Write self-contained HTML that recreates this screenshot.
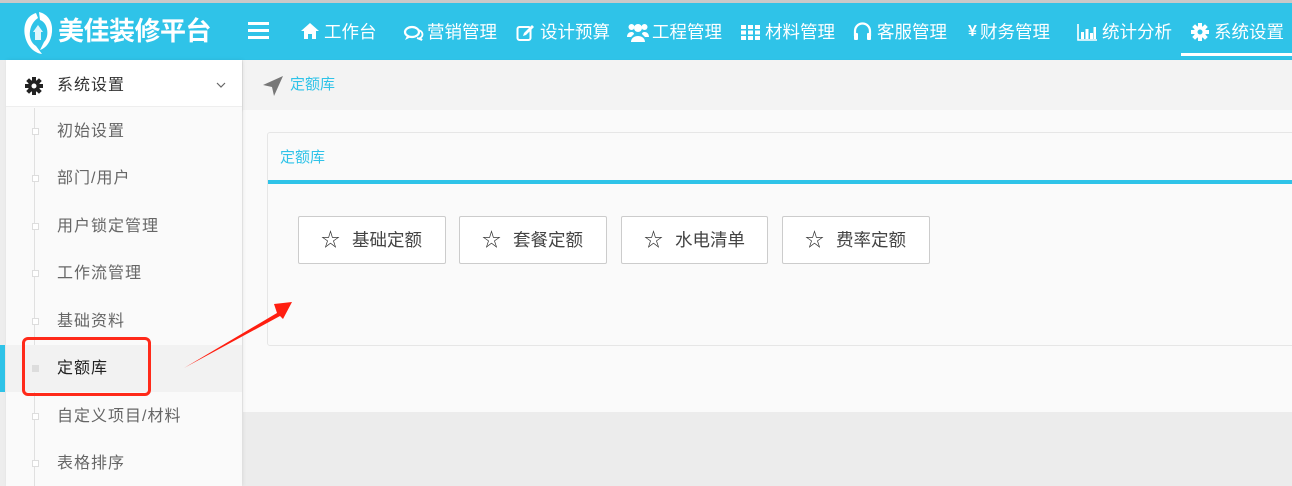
<!DOCTYPE html>
<html><head><meta charset="utf-8">
<style>
*{margin:0;padding:0;box-sizing:border-box}
body{width:1292px;height:486px;overflow:hidden;background:#ececec;font-family:"Liberation Sans","Noto Sans CJK SC",sans-serif;position:relative}
.a{position:absolute;white-space:nowrap}
#top{left:0;top:0;width:1292px;height:3px;background:#c9c9c9}
#hdr{left:0;top:3px;width:1292px;height:57px;background:#2fc3e8}
.nav{color:#fff;font-size:17.5px;top:20px;line-height:24px}
#crumb{left:243px;top:60px;width:1049px;height:50px;background:#f3f3f3;box-shadow:0 1px 2px rgba(0,0,0,.12)}
#main{left:243px;top:110px;width:1049px;height:302px;background:#fafafa}
#side{left:6px;top:60px;width:236px;height:426px;background:#fafafa;box-shadow:1px 0 4px rgba(0,0,0,.08)}
.it{left:57px;font-size:16px;letter-spacing:1px;color:#666;line-height:20px}
.dot{left:32px;width:7px;height:7px;border:1px solid #ddd;background:#fff}
.btn{top:216px;height:48px;width:148px;background:#fff;border:1px solid #ccc;border-radius:2px;font-size:17.5px;color:#444;line-height:46px;padding-left:22px}
.btn span{font-size:19px;margin-right:12px;color:#333}
</style></head><body>
<div class="a" id="top"></div>
<div class="a" id="hdr"></div>
<svg class="a" style="left:22px;top:10px" width="32" height="46" viewBox="0 0 32 46"><path d="M14 3 C4 6 1 16 3 26 C5 36 12 43 20 44 L14 36 C9 33 7 27 8 21 C9 14 13 10 16 8 Z" fill="#fff"/><path d="M17 2 C26 4 31 12 30 22 C29 32 24 38 18 40 L22 32 C25 29 26 24 25 19 C24 14 21 11 18 10 Z" fill="#fff"/><path d="M11 22 L16 15 L21 22 L19 22 L19 30 L13 30 L13 22Z" fill="#fff" opacity=".85"/></svg>
<div class="a" style="left:58px;top:14px;color:#fff;font-size:26px;font-weight:bold;line-height:34px;letter-spacing:-.5px">美佳装修平台</div>
<div class="a" style="left:248px;top:22px;width:21px;height:3px;background:#fff;box-shadow:0 7px 0 #fff,0 14px 0 #fff"></div>
<svg class="a" style="left:300px;top:22px" width="20" height="18" viewBox="0 0 20 18"><path d="M10 1 L1 9 H4 V17 H8 V12 H12 V17 H16 V9 H19Z" fill="#fff"/></svg>
<div class="a nav" style="left:324px">工作台</div>
<svg class="a" style="left:403px;top:25px" width="22" height="16" viewBox="0 0 22 16"><ellipse cx="9" cy="7" rx="7" ry="5" fill="none" stroke="#fff" stroke-width="2.2"/><path d="M4 11 L2 15 L8 12" fill="#fff"/><path d="M15 5 C20 6 21 11 17 13 L19 15 L14 13" fill="none" stroke="#fff" stroke-width="1.8"/></svg>
<div class="a nav" style="left:427px">营销管理</div>
<svg class="a" style="left:516px;top:24px" width="19" height="18" viewBox="0 0 19 18"><rect x="1.5" y="3" width="13" height="13" rx="2" fill="none" stroke="#fff" stroke-width="2"/><path d="M7 12 L8 9 L16 1 L18 3 L10 11Z" fill="#fff"/></svg>
<div class="a nav" style="left:540px">设计预算</div>
<svg class="a" style="left:627px;top:22px" width="22" height="20" viewBox="0 0 22 20"><circle cx="11" cy="6" r="4" fill="#fff"/><circle cx="4.5" cy="5" r="3" fill="#fff"/><circle cx="17.5" cy="5" r="3" fill="#fff"/><path d="M4 20 C4 12 18 12 18 20Z M0 15 C0 9 7 9 7 12 L4 15Z M22 15 C22 9 15 9 15 12 L18 15Z" fill="#fff"/></svg>
<div class="a nav" style="left:652px">工程管理</div>
<svg class="a" style="left:741px;top:25px" width="19" height="15" viewBox="0 0 19 15"><g fill="#fff"><rect x="0" y="0" width="5" height="4"/><rect x="7" y="0" width="5" height="4"/><rect x="14" y="0" width="5" height="4"/><rect x="0" y="5.5" width="5" height="4"/><rect x="7" y="5.5" width="5" height="4"/><rect x="14" y="5.5" width="5" height="4"/><rect x="0" y="11" width="5" height="4"/><rect x="7" y="11" width="5" height="4"/><rect x="14" y="11" width="5" height="4"/></g></svg>
<div class="a nav" style="left:765px">材料管理</div>
<svg class="a" style="left:853px;top:22px" width="19" height="19" viewBox="0 0 19 19"><path d="M2 14 V9 A7.5 7.5 0 0 1 17 9 V14" fill="none" stroke="#fff" stroke-width="2.2"/><rect x="1" y="11" width="4" height="7" rx="1" fill="#fff"/><rect x="14" y="11" width="4" height="7" rx="1" fill="#fff"/></svg>
<div class="a nav" style="left:877px">客服管理</div>
<div class="a nav" style="left:968px;font-weight:bold;font-size:16px">¥</div>
<div class="a nav" style="left:980px">财务管理</div>
<svg class="a" style="left:1077px;top:24px" width="20" height="17" viewBox="0 0 20 17"><path d="M1 0 V16 H20" fill="none" stroke="#fff" stroke-width="1.6"/><g fill="#fff"><rect x="4" y="8" width="3" height="7"/><rect x="8.5" y="5" width="3" height="10"/><rect x="13" y="9" width="3" height="6"/><rect x="16.5" y="3" width="2.5" height="12"/></g></svg>
<div class="a nav" style="left:1102px">统计分析</div>
<svg class="a" style="left:1191px;top:23px" width="18" height="18" viewBox="-9 -9 18 18"><g fill="#fff"><circle r="6"/><g id="t"><rect x="-2" y="-9" width="4" height="4"/></g><use href="#t" transform="rotate(45)"/><use href="#t" transform="rotate(90)"/><use href="#t" transform="rotate(135)"/><use href="#t" transform="rotate(180)"/><use href="#t" transform="rotate(225)"/><use href="#t" transform="rotate(270)"/><use href="#t" transform="rotate(315)"/></g><circle r="2.5" fill="#2fc3e8"/></svg>
<div class="a nav" style="left:1214px">系统设置</div>
<div class="a" style="left:1181px;top:53px;width:111px;height:3px;background:#fff"></div>

<div class="a" id="crumb"></div>
<svg class="a" style="left:262px;top:75px" width="22" height="22" viewBox="0 0 22 22"><path d="M21 1 L1 10 L10 12 L12 21Z" fill="#777"/></svg>
<div class="a" style="left:290px;top:75px;font-size:15px;color:#2fc3e8;line-height:20px">定额库</div>
<div class="a" id="main"></div>
<div class="a" style="left:267px;top:132px;width:1030px;height:214px;background:#fafafa;border:1px solid #e6e6e6;border-radius:3px"></div>
<div class="a" style="left:280px;top:148px;font-size:15px;color:#2fc3e8;line-height:20px">定额库</div>
<div class="a" style="left:268px;top:180px;width:1024px;height:4px;background:#2fc3e8"></div>
<div class="a btn" style="left:298px"><span>☆</span>基础定额</div>
<div class="a btn" style="left:459px"><span>☆</span>套餐定额</div>
<div class="a btn" style="left:621px;width:147px"><span>☆</span>水电清单</div>
<div class="a btn" style="left:782px"><span>☆</span>费率定额</div>

<div class="a" style="left:0;top:60px;width:6px;height:426px;background:#ededed"></div>
<div class="a" id="side"></div>
<div class="a" style="left:6px;top:60px;width:236px;height:47px;background:#fff;border-bottom:1px solid #eee"></div>
<svg class="a" style="left:25px;top:77px" width="18" height="18" viewBox="-9 -9 18 18"><g fill="#222"><circle r="6"/><g id="t2"><rect x="-2" y="-9" width="4" height="4"/></g><use href="#t2" transform="rotate(45)"/><use href="#t2" transform="rotate(90)"/><use href="#t2" transform="rotate(135)"/><use href="#t2" transform="rotate(180)"/><use href="#t2" transform="rotate(225)"/><use href="#t2" transform="rotate(270)"/><use href="#t2" transform="rotate(315)"/></g><circle r="2.5" fill="#fff"/></svg>
<div class="a" style="left:57px;top:76px;font-size:16px;letter-spacing:1px;color:#333;line-height:20px">系统设置</div>
<svg class="a" style="left:216px;top:82px" width="10" height="7" viewBox="0 0 10 7"><path d="M1 1 L5 5 L9 1" fill="none" stroke="#666" stroke-width="1.2"/></svg>
<div class="a" style="left:34px;top:108px;width:1px;height:378px;background:#e0e0e0"></div>
<div class="a" style="left:6px;top:345px;width:236px;height:47px;background:#f2f2f2"></div>
<div class="a" style="left:0;top:345px;width:5px;height:47px;background:#2fc3e8"></div>
<div class="a dot" style="top:128px"></div><div class="a it" style="top:122px">初始设置</div>
<div class="a dot" style="top:175px"></div><div class="a it" style="top:169px">部门/用户</div>
<div class="a dot" style="top:223px"></div><div class="a it" style="top:217px">用户锁定管理</div>
<div class="a dot" style="top:270px"></div><div class="a it" style="top:264px">工作流管理</div>
<div class="a dot" style="top:318px"></div><div class="a it" style="top:312px">基础资料</div>
<div class="a dot" style="top:365px;background:#ddd"></div><div class="a it" style="top:359px;color:#222">定额库</div>
<div class="a dot" style="top:413px"></div><div class="a it" style="top:407px">自定义项目/材料</div>
<div class="a dot" style="top:460px"></div><div class="a it" style="top:454px">表格排序</div>
<div class="a" style="left:22px;top:337px;width:129px;height:59px;border:3px solid #ff2a1a;border-radius:6px"></div>
<svg class="a" style="left:180px;top:298px" width="116" height="74" viewBox="180 298 116 74"><path d="M184 368 L277 313 L274 304 L292 302 L283 319 L280 316 Z" fill="#ff1e10"/></svg>
</body></html>
